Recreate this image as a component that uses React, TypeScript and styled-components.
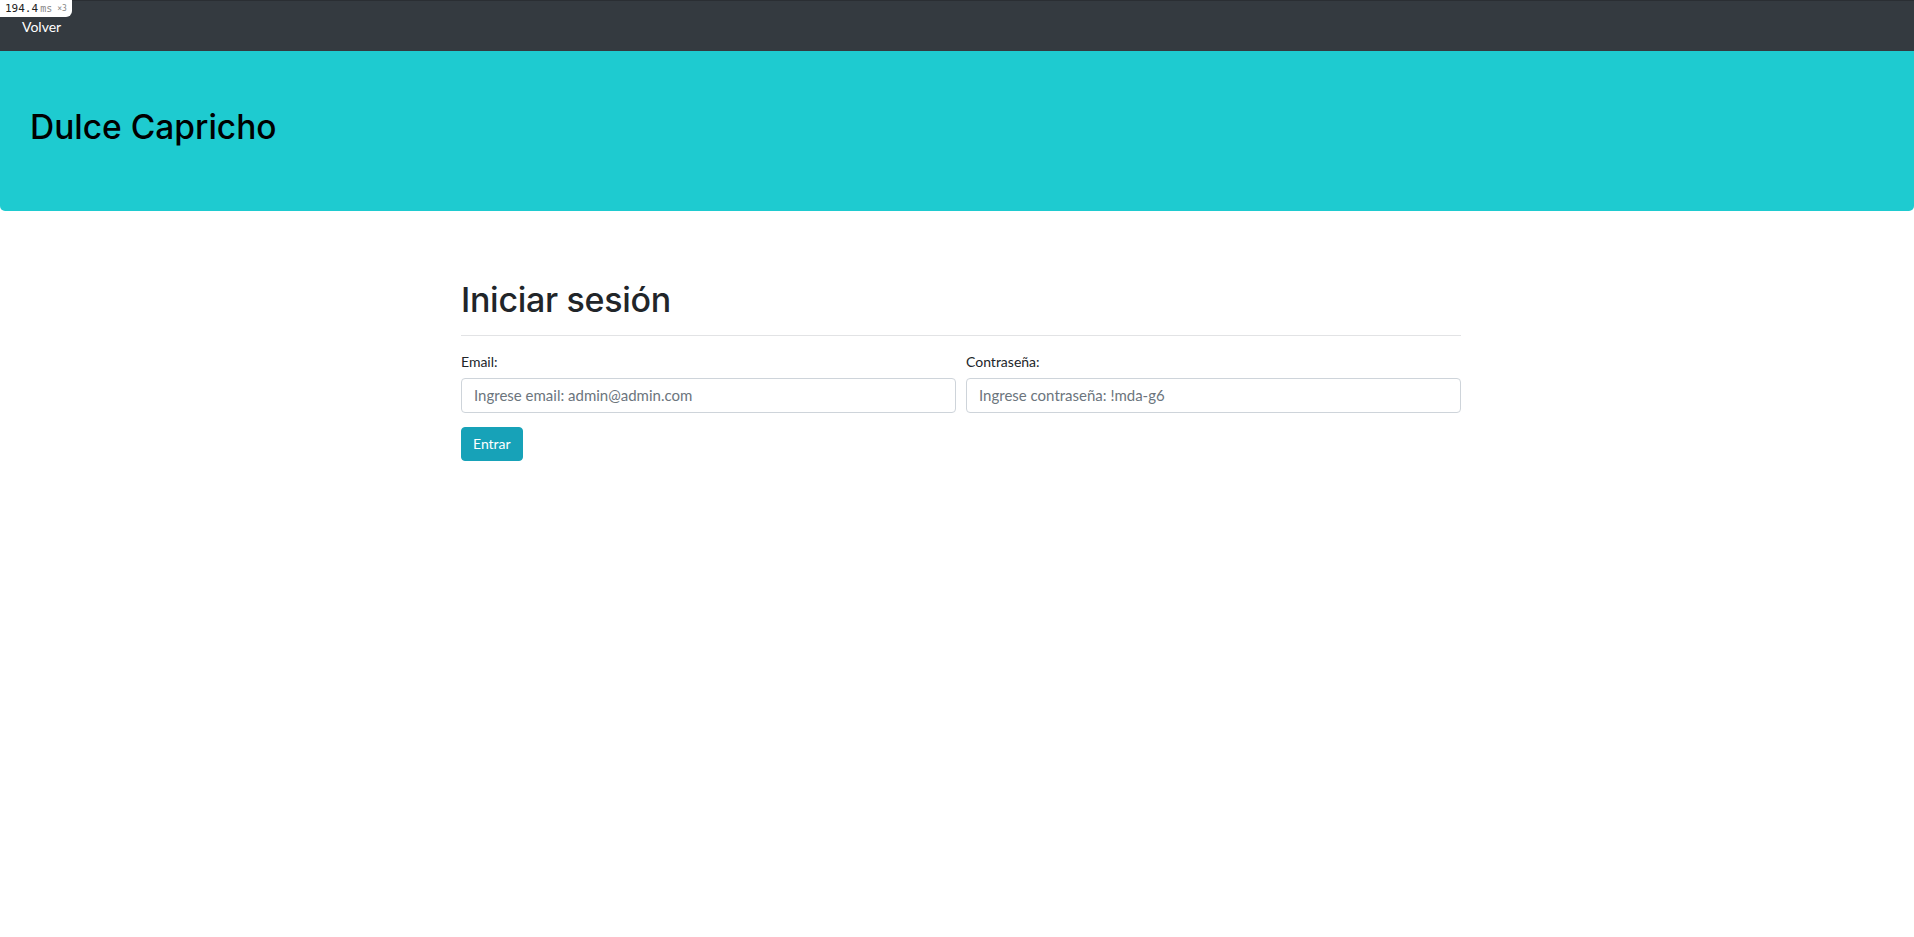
import React from "react";
import styled, { createGlobalStyle } from "styled-components";

const GlobalStyle = createGlobalStyle`
  html, body {
    margin: 0;
    padding: 0;
    background: #ffffff;
    font-family: Lato, "Open Sans", "Noto Sans", sans-serif;
    color: #212529;
  }
  * { box-sizing: border-box; }
`;

const Page = styled.div`
  position: relative;
  min-height: 937px;
`;

const PerfBadge = styled.div`
  position: absolute;
  top: 0;
  left: 0;
  height: 17px;
  padding: 0 5px 0 5px;
  background: #ffffff;
  border-bottom-right-radius: 6px;
  display: flex;
  align-items: center;
  gap: 2px;
  font-family: "DejaVu Sans Mono", "Liberation Mono", monospace;
  font-size: 11px;
  color: #222;
  z-index: 10;
`;

const BadgeUnit = styled.span<{ $small?: boolean }>`
  color: #888;
  font-size: ${(p) => (p.$small ? "8px" : "10px")};
  margin-left: ${(p) => (p.$small ? "3px" : "0")};
`;

const NavBar = styled.nav`
  height: 51px;
  background: #343a40;
  border-top: 1px solid #2a2e33;
  display: flex;
  align-items: flex-start;
  padding: 16px 0 0 22px;
`;

const NavLink = styled.a`
  color: #ffffff;
  font-size: 14px;
  line-height: 20px;
  text-decoration: none;
  cursor: pointer;
`;

const Jumbotron = styled.header`
  height: 160px;
  background: #1ecbd0;
  border-radius: 0 0 5px 5px;
  padding: 56px 0 0 30px;
`;

const BrandTitle = styled.h1`
  margin: 0;
  font-family: Inter, Lato, sans-serif;
  font-size: 33.5px;
  line-height: 1.2;
  font-weight: 500;
  color: #000;
`;

const Main = styled.main`
  width: 1008px;
  margin: 0 auto;
  padding: 69px 0 0 8px;
`;

const PageTitle = styled.h1`
  margin: 0;
  font-family: Inter, Lato, sans-serif;
  font-size: 34px;
  letter-spacing: -0.3px;
  line-height: 1.2;
  font-weight: 500;
  color: #212529;
`;

const Divider = styled.hr`
  margin: 14px 0 15px;
  border: 0;
  border-top: 1px solid #e2e3e5;
`;

const FormRow = styled.div`
  display: grid;
  grid-template-columns: 1fr 1fr;
  column-gap: 10px;
`;

const Field = styled.div`
  display: flex;
  flex-direction: column;
`;

const Label = styled.label`
  font-size: 14px;
  line-height: 1.5;
  margin-bottom: 6px;
  color: #212529;
`;

const Input = styled.input`
  height: 35px;
  padding: 6px 12px;
  font-family: inherit;
  font-size: 15px;
  color: #495057;
  border: 1px solid #ced4da;
  border-radius: 4px;
  background: #fff;
  outline: none;
  &::placeholder { color: #6c757d; }
`;

const SubmitButton = styled.button`
  margin-top: 14px;
  height: 34px;
  padding: 0 11px;
  font-family: inherit;
  font-size: 14px;
  color: #fff;
  background: #17a2b8;
  border: 1px solid #17a2b8;
  border-radius: 4px;
  cursor: pointer;
`;

export default function App() {
  return (
    <Page>
      <GlobalStyle />
      <PerfBadge>
        194.4<BadgeUnit>ms</BadgeUnit><BadgeUnit $small>×3</BadgeUnit>
      </PerfBadge>
      <NavBar>
        <NavLink>Volver</NavLink>
      </NavBar>
      <Jumbotron>
        <BrandTitle>Dulce Capricho</BrandTitle>
      </Jumbotron>
      <Main>
        <PageTitle>Iniciar sesión</PageTitle>
        <Divider />
        <form onSubmit={(e) => e.preventDefault()}>
          <FormRow>
            <Field>
              <Label htmlFor="email">Email:</Label>
              <Input id="email" type="email" placeholder="Ingrese email: admin@admin.com" />
            </Field>
            <Field>
              <Label htmlFor="password">Contraseña:</Label>
              <Input id="password" type="password" placeholder="Ingrese contraseña: !mda-g6" />
            </Field>
          </FormRow>
          <SubmitButton type="submit">Entrar</SubmitButton>
        </form>
      </Main>
    </Page>
  );
}
